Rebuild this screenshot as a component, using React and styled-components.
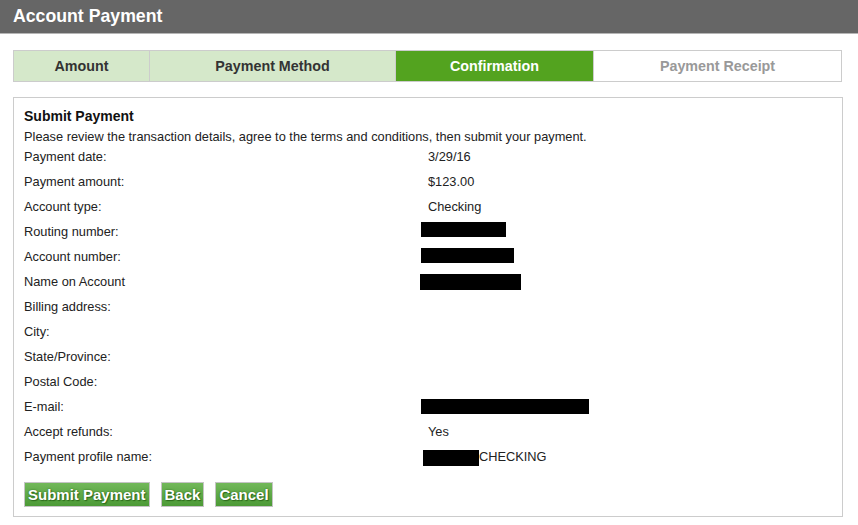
import React from 'react'
import styled, { createGlobalStyle } from 'styled-components'

const GlobalStyle = createGlobalStyle`
  body {
    margin: 0;
    background: #fff;
    font-family: "Liberation Sans", Arial, sans-serif;
    color: #222;
  }
`

const steps = [
  { label: 'Amount', state: 'done' },
  { label: 'Payment Method', state: 'done' },
  { label: 'Confirmation', state: 'active' },
  { label: 'Payment Receipt', state: 'todo' },
]

const rows = [
  { label: 'Payment date:', value: '3/29/16' },
  { label: 'Payment amount:', value: '$123.00' },
  { label: 'Account type:', value: 'Checking' },
  { label: 'Routing number:', hidden: { w: 85, x: -7, y: 0, h: 15 } },
  { label: 'Account number:', hidden: { w: 93, x: -7, y: 1, h: 15 } },
  { label: 'Name on Account', hidden: { w: 101, x: -8, y: 2, h: 16 } },
  { label: 'Billing address:' },
  { label: 'City:' },
  { label: 'State/Province:' },
  { label: 'Postal Code:' },
  { label: 'E-mail:', hidden: { w: 168, x: -7, y: 2, h: 15 } },
  { label: 'Accept refunds:', value: 'Yes' },
  { label: 'Payment profile name:', hidden: { w: 56, x: -5, y: 3, h: 16 }, value: 'CHECKING' },
]

const App = () => (
  <>
    <GlobalStyle />
    <TitleBar>Account Payment</TitleBar>
    <Page>
      <Steps>
        {steps.map(s => (
          <Step key={s.label} state={s.state}>{s.label}</Step>
        ))}
      </Steps>

      <Panel>
        <PanelTitle>Submit Payment</PanelTitle>
        <Intro>
          Please review the transaction details, agree to the terms and conditions, then submit your payment.
        </Intro>

        <Details>
          {rows.map(r => (
            <Row key={r.label}>
              <Label>{r.label}</Label>
              <Value>
                {r.hidden && (
                  <Redacted
                    $w={r.hidden.w}
                    $x={r.hidden.x}
                    $y={r.hidden.y}
                    $h={r.hidden.h}
                  />
                )}
                {r.value}
              </Value>
            </Row>
          ))}
        </Details>

        <Actions>
          <Button>Submit Payment</Button>
          <Button>Back</Button>
          <Button>Cancel</Button>
        </Actions>
      </Panel>
    </Page>
  </>
)

const TitleBar = styled.div`
  height: 33px;
  line-height: 33px;
  padding-left: 13px;
  background: #666;
  border-bottom: 1px solid #b5b5b5;
  color: #fff;
  font-size: 17.7px;
  font-weight: bold;
`

const Page = styled.div`
  padding: 16px 16px 0 13px;
`

const Steps = styled.div`
  display: grid;
  grid-template-columns: 135px 246px 198px 1fr;
  width: 829px;
  box-sizing: border-box;
  border: 1px solid #ccc;
  height: 32px;
`

const stepBg = { done: '#d5e8ca', active: '#53a31f', todo: '#fff' }
const stepColor = { done: '#333', active: '#fff', todo: '#999' }

const Step = styled.div`
  display: flex;
  align-items: center;
  justify-content: center;
  background: ${p => stepBg[p.state]};
  color: ${p => stepColor[p.state]};
  font-size: 14.3px;
  font-weight: bold;
  & + & {
    border-left: 1px solid #ccc;
  }
`

const Panel = styled.div`
  margin-top: 15px;
  width: 830px;
  box-sizing: border-box;
  border: 1px solid #ccc;
  padding: 8px 10px 9px 10px;
  font-size: 12.8px;
`

const PanelTitle = styled.div`
  font-size: 14px;
  font-weight: bold;
  line-height: 21px;
  color: #111;
`

const Intro = styled.div`
  line-height: 20px;
`

const Details = styled.div``

const Row = styled.div`
  display: grid;
  grid-template-columns: 404px 1fr;
  height: 25px;
  line-height: 20px;
`

const Label = styled.div``

const Value = styled.div`
  display: flex;
`

const Redacted = styled.span`
  display: inline-block;
  width: ${p => p.$w}px;
  height: ${p => p.$h}px;
  margin-left: ${p => p.$x}px;
  margin-top: ${p => p.$y}px;
  background: #000;
`

const Actions = styled.div`
  display: flex;
  gap: 11px;
  margin-top: 10px;
`

const Button = styled.button`
  height: 25px;
  padding: 0 3px;
  border: 1px solid #c4c4c4;
  border-radius: 0;
  background: linear-gradient(#72b85a, #4c9a36);
  color: #fff;
  font-family: "Liberation Sans", Arial, sans-serif;
  font-size: 15px;
  font-weight: bold;
  text-shadow: 0 0 2px #2d6a1c, 1px 1px 1px #2d6a1c;
  cursor: pointer;
`

export default App
